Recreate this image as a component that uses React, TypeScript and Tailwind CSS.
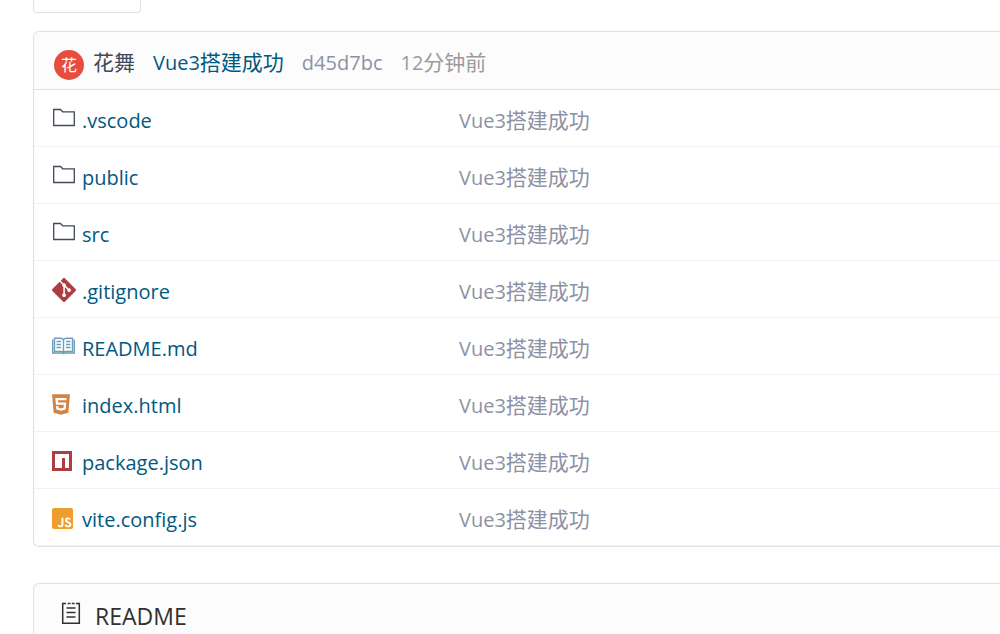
import type { ReactNode } from 'react'
import { SiGit, SiHtml5, SiJavascript } from 'react-icons/si'

type FileEntry = {
  name: string
  icon: ReactNode
}

const files: FileEntry[] = [
  { name: '.vscode', icon: <FolderIcon /> },
  { name: 'public', icon: <FolderIcon /> },
  { name: 'src', icon: <FolderIcon /> },
  { name: '.gitignore', icon: <SiGit className="size-6 text-[#ae3d3f]" /> },
  { name: 'README.md', icon: <BookIcon /> },
  {
    name: 'index.html',
    icon: <SiHtml5 viewBox="1.5 0 21 24" className="h-[21px] w-[18px] text-[#d28445]" />,
  },
  { name: 'package.json', icon: <NpmIcon /> },
  {
    name: 'vite.config.js',
    icon: <SiJavascript className="size-[21px] rounded-xs text-[#ee9e2e]" />,
  },
]

function FolderIcon() {
  return (
    <svg viewBox="0 0 24 24" className="size-6" fill="none" stroke="#40485b" strokeWidth="1.3">
      <path d="M1.7 18.5V2.500h6.800l2.200 2.300h11.600v13.700z" />
    </svg>
  )
}

function BookIcon() {
  return (
    <svg viewBox="0 0 24 24" className="size-6" fill="none" stroke="#6a9fb5" strokeWidth="1.4">
      <path d="M11.500 4.500C10.500 3.500 9.500 3.200 8.300 3.200H2.500v13.300h6.300c1.200 0 2 .3 2.700 1 .7-.7 1.500-1 2.700-1h6.300V3.200h-5.800c-1.200 0-2.200.3-3.200 1.300z" />
      <path d="M11.500 4.500v13M.7 4.500v13.500h9.800l1 .6 1-.6h9.800V4.500" />
      <path d="M4.500 6.500H9M4.500 9.500H9M4.500 12.500H9M14 6.500h4.500M14 9.500h4.500M14 12.500h4.500" />
    </svg>
  )
}

function NpmIcon() {
  return (
    <svg viewBox="0 0 20 20" className="size-5">
      <path fill="#ae3d3f" fillRule="evenodd" d="M0 0h20v20H0zM3 3v14h7V7h3v10h4V3z" />
    </svg>
  )
}

function ReadmeIcon() {
  return (
    <svg viewBox="0 0 20 24" className="h-6 w-5" fill="none" stroke="#303030" strokeWidth="1.5">
      <path d="M5 1.500H1.700v19.800h16.600V1.500H15M6.700 1.500h2.800M10.800 1.500h2.800" />
      <path d="M5.500 6h9M5.500 10.500h9M5.500 15h9" />
    </svg>
  )
}

function CommitMessage() {
  return (
    <>
      Vue3<span className="text-[21px]">搭建成功</span>
    </>
  )
}

function FileRow({ file }: { file: FileEntry }) {
  return (
    <tr className="h-[57px]">
      <td className="w-[425px] border-b border-[#f0f2f5] pt-0.5 pl-[18px]">
        <a href="#" className="flex items-center text-[#005980]">
          <span className="flex w-[30px] shrink-0">{file.icon}</span>
          <span className="pt-1">{file.name}</span>
        </a>
      </td>
      <td className="border-b border-[#f0f2f5] pt-1.5">
        <a href="#" className="text-[#8c92a4]">
          <CommitMessage />
        </a>
      </td>
    </tr>
  )
}

export default function App() {
  return (
    <main className="min-h-screen overflow-hidden bg-white pl-[33px] font-['Open_Sans','Noto_Sans_CJK_SC',sans-serif] text-xl">
      <div className="h-[13px] w-[108px] rounded-b-sm border border-t-0 border-[#dce3e8]" />

      <section className="mt-[18px] rounded-l-md border border-r-0 border-[#dce1e6]">
        <header className="flex h-[58px] items-center rounded-tl-md border-b border-[#dce1e6] bg-[#fcfcfc] pt-1 pl-5">
          <span className="mt-1 mr-[9px] flex size-[30px] items-center justify-center rounded-full bg-[#e84c3d] text-base text-white">
            花
          </span>
          <a href="#" className="mr-[18px] text-[21px] text-[#40485b]">
            花舞
          </a>
          <a href="#" className="mr-[18px] text-[#005980]">
            <CommitMessage />
          </a>
          <a href="#" className="mr-[18px] text-[#8c92a4]">
            d45d7bc
          </a>
          <span className="text-[#9b9b9b]">
            12<span className="text-[21px]">分钟前</span>
          </span>
        </header>
        <table className="w-full border-separate border-spacing-0">
          <tbody>
            {files.map((file) => (
              <FileRow key={file.name} file={file} />
            ))}
          </tbody>
        </table>
      </section>

      <section className="mt-9 rounded-tl-md border border-r-0 border-b-0 border-[#dce1e6] bg-[#fcfcfc]">
        <h2 className="flex h-[60px] items-center pl-[27px] text-[23px] text-[#303030]">
          <span className="mr-[14px] flex">
            <ReadmeIcon />
          </span>
          <span className="pt-1">README</span>
        </h2>
      </section>
    </main>
  )
}
